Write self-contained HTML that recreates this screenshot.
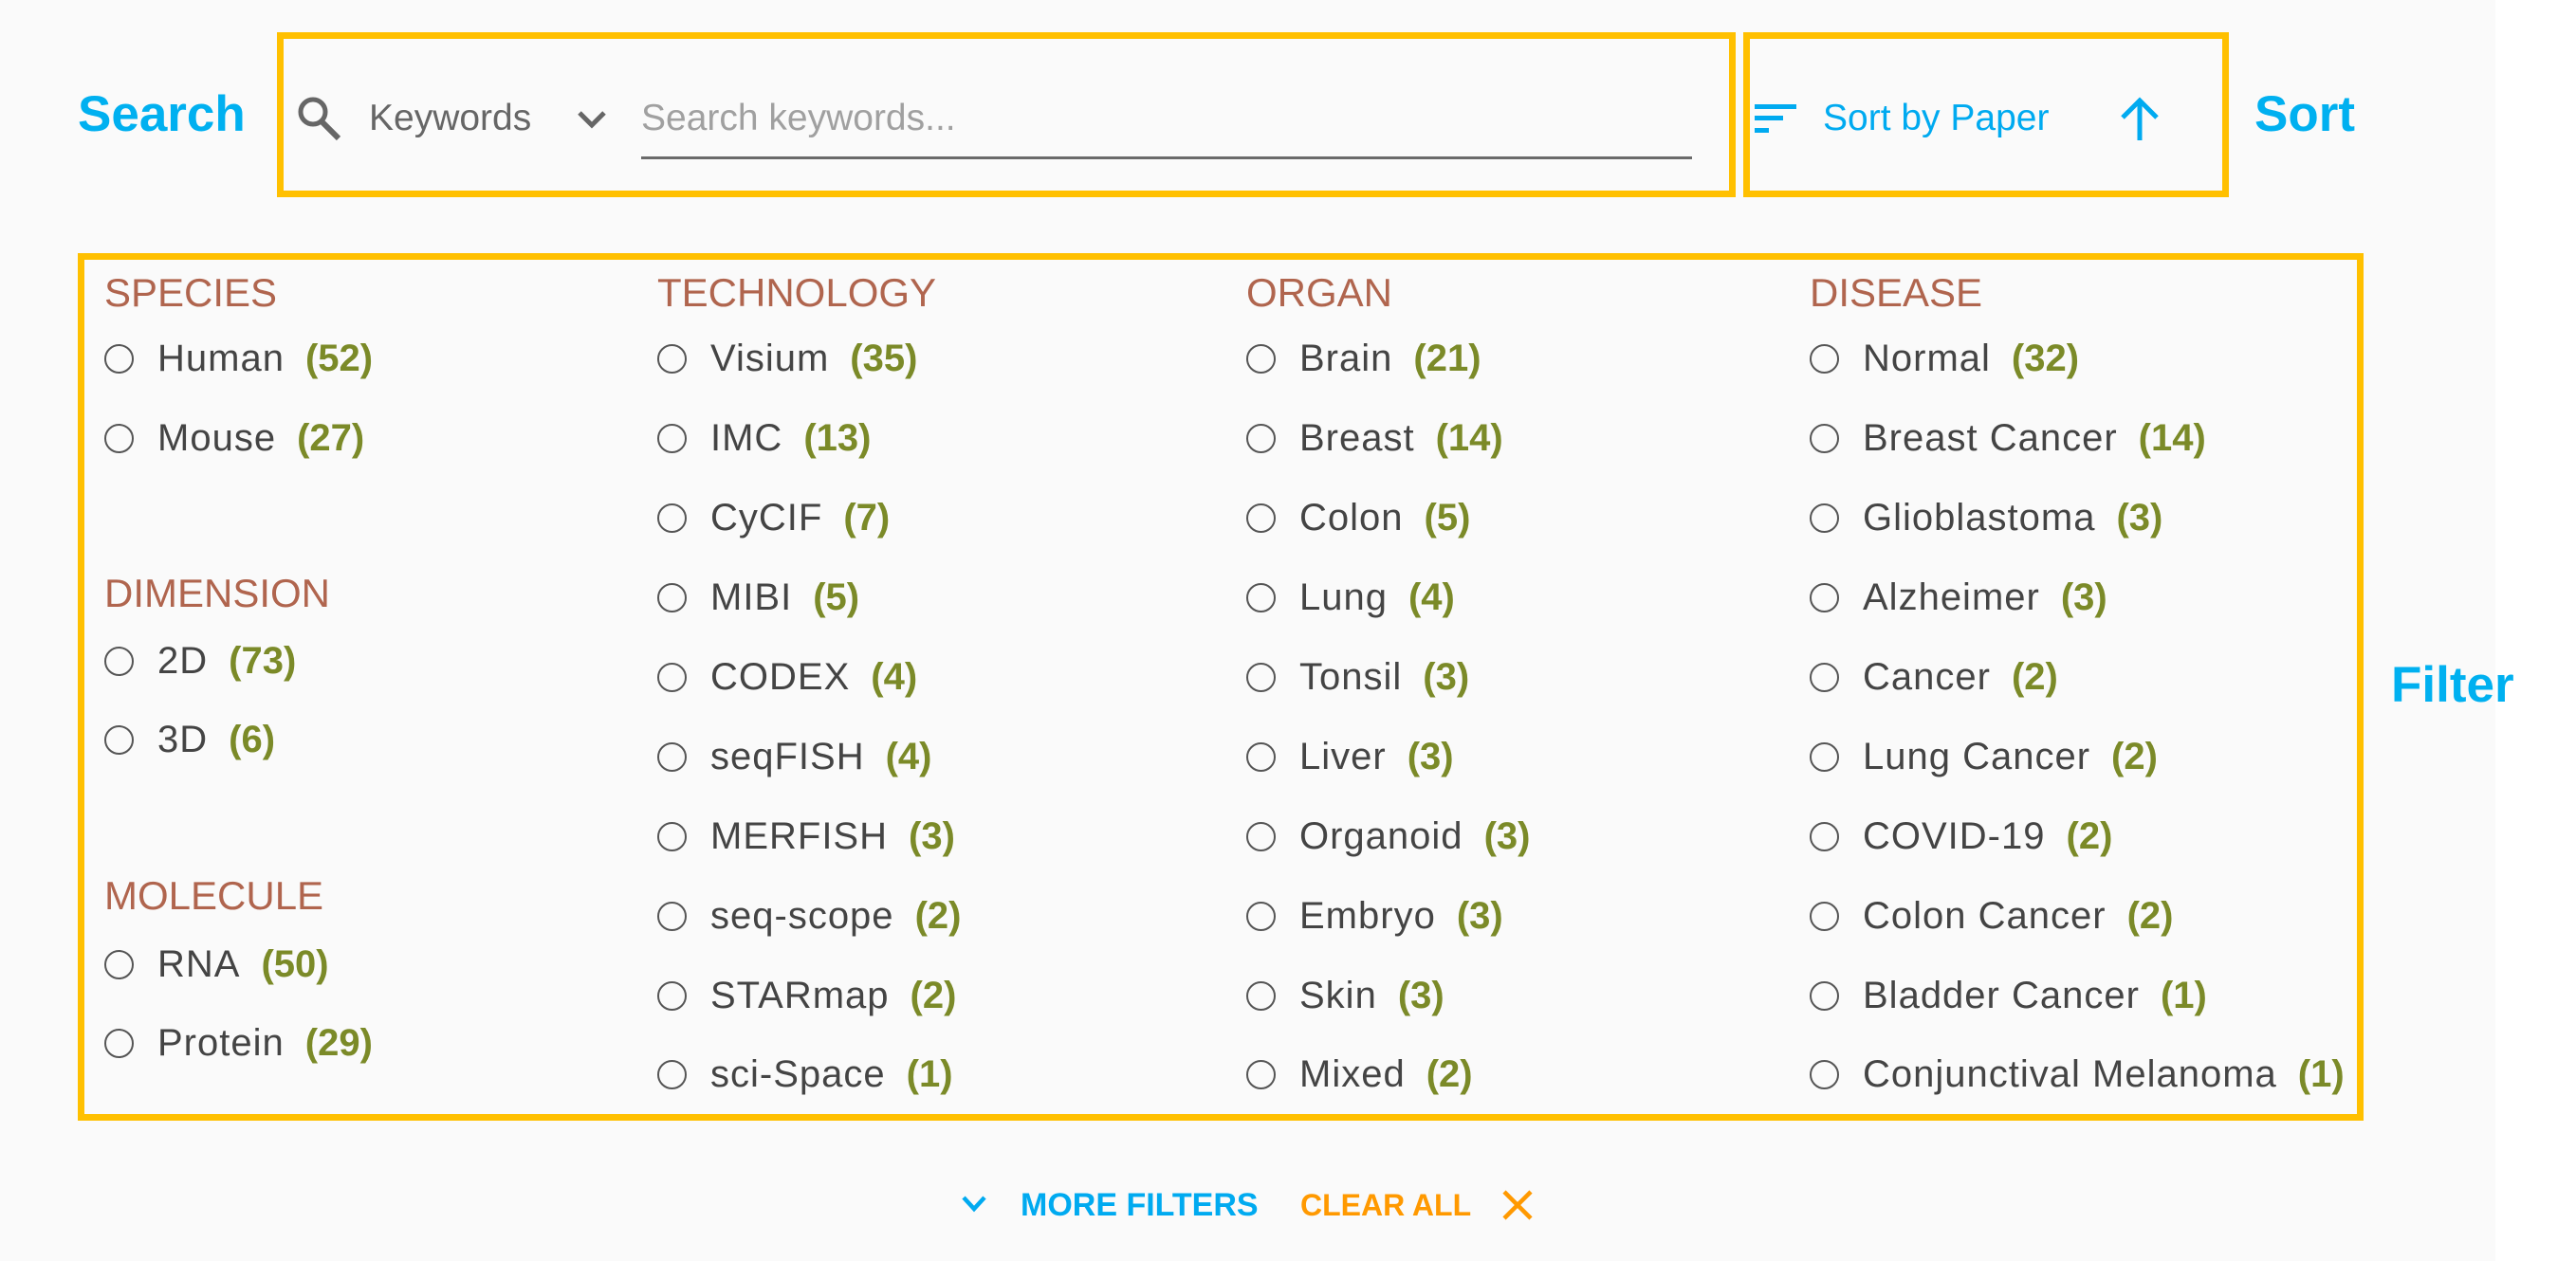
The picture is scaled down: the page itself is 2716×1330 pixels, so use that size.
<!DOCTYPE html>
<html><head><meta charset="utf-8"><style>
html,body{margin:0;padding:0;}
body{width:2716px;height:1330px;background:#fff;position:relative;overflow:hidden;font-family:"Liberation Sans",sans-serif;}
#bg{position:absolute;left:0;top:0;width:2631px;height:1330px;background:#fafafa;}
.box{position:absolute;border:7px solid #ffc000;box-sizing:border-box;}
.lbl{position:absolute;color:#00b0f0;font-weight:bold;font-size:53px;line-height:60px;}
.h{position:absolute;color:#b0654e;font-size:42px;line-height:50px;height:50px;}
.it{position:absolute;font-size:40px;line-height:50px;height:50px;white-space:nowrap;color:#444;letter-spacing:1px;}
.it .c{position:absolute;left:0;top:10px;width:27px;height:27px;border:2.5px solid #555;border-radius:50%;}
.it .t{position:absolute;left:56px;top:0;}
.it b{color:#7b8a28;font-weight:bold;margin-left:22px;letter-spacing:0;}
</style></head><body>
<div id="bg"></div>

<div class="lbl" style="left:82px;top:91px;">Search</div>
<div class="box" style="left:292px;top:34px;width:1538px;height:174px;"></div>
<svg style="position:absolute;left:311px;top:100px" width="52" height="50" viewBox="0 0 52 50"><circle cx="19" cy="18" r="13" fill="none" stroke="#666" stroke-width="5"/><line x1="28" y1="28" x2="46" y2="46" stroke="#666" stroke-width="6"/></svg>
<div style="position:absolute;left:389px;top:100px;font-size:39px;line-height:50px;color:#666;">Keywords</div>
<svg style="position:absolute;left:606px;top:114px" width="36" height="24" viewBox="0 0 36 24"><polyline points="5,5 18,18 31,5" fill="none" stroke="#666" stroke-width="5"/></svg>
<div style="position:absolute;left:676px;top:100px;font-size:39px;line-height:50px;color:#a0a0a0;">Search keywords...</div>
<div style="position:absolute;left:676px;top:165px;width:1108px;height:3px;background:#6a6a6a;"></div>

<div class="box" style="left:1838px;top:34px;width:512px;height:174px;"></div>
<div style="position:absolute;left:1850px;top:110px;width:44px;height:5px;background:#00aaf0"></div>
<div style="position:absolute;left:1850px;top:122px;width:30px;height:5px;background:#00aaf0"></div>
<div style="position:absolute;left:1850px;top:135px;width:15px;height:5px;background:#00aaf0"></div>
<div style="position:absolute;left:1922px;top:100px;font-size:39px;line-height:50px;color:#00aaf0;">Sort by Paper</div>
<svg style="position:absolute;left:2232px;top:102px" width="48" height="48" viewBox="0 0 48 48"><line x1="24" y1="4" x2="24" y2="46" stroke="#00aaf0" stroke-width="5"/><polyline points="6,22 24,4 42,22" fill="none" stroke="#00aaf0" stroke-width="5"/></svg>
<div class="lbl" style="left:2377px;top:91px;">Sort</div>

<div class="box" style="left:82px;top:267px;width:2410px;height:915px;"></div>
<div class="lbl" style="left:2521px;top:693px;">Filter</div>

<div class="h" style="left:110px;top:284px;">SPECIES</div>
<div class="it" style="left:110px;top:353px;"><i class="c"></i><span class="t">Human<b>(52)</b></span></div>
<div class="it" style="left:110px;top:437px;"><i class="c"></i><span class="t">Mouse<b>(27)</b></span></div>
<div class="h" style="left:110px;top:601px;">DIMENSION</div>
<div class="it" style="left:110px;top:672px;"><i class="c"></i><span class="t">2D<b>(73)</b></span></div>
<div class="it" style="left:110px;top:755px;"><i class="c"></i><span class="t">3D<b>(6)</b></span></div>
<div class="h" style="left:110px;top:920px;">MOLECULE</div>
<div class="it" style="left:110px;top:992px;"><i class="c"></i><span class="t">RNA<b>(50)</b></span></div>
<div class="it" style="left:110px;top:1075px;"><i class="c"></i><span class="t">Protein<b>(29)</b></span></div>

<div class="h" style="left:693px;top:284px;">TECHNOLOGY</div>
<div class="it" style="left:693px;top:353px;"><i class="c"></i><span class="t">Visium<b>(35)</b></span></div>
<div class="it" style="left:693px;top:437px;"><i class="c"></i><span class="t">IMC<b>(13)</b></span></div>
<div class="it" style="left:693px;top:521px;"><i class="c"></i><span class="t">CyCIF<b>(7)</b></span></div>
<div class="it" style="left:693px;top:605px;"><i class="c"></i><span class="t">MIBI<b>(5)</b></span></div>
<div class="it" style="left:693px;top:689px;"><i class="c"></i><span class="t">CODEX<b>(4)</b></span></div>
<div class="it" style="left:693px;top:773px;"><i class="c"></i><span class="t">seqFISH<b>(4)</b></span></div>
<div class="it" style="left:693px;top:857px;"><i class="c"></i><span class="t">MERFISH<b>(3)</b></span></div>
<div class="it" style="left:693px;top:941px;"><i class="c"></i><span class="t">seq-scope<b>(2)</b></span></div>
<div class="it" style="left:693px;top:1025px;"><i class="c"></i><span class="t">STARmap<b>(2)</b></span></div>
<div class="it" style="left:693px;top:1108px;"><i class="c"></i><span class="t">sci-Space<b>(1)</b></span></div>

<div class="h" style="left:1314px;top:284px;">ORGAN</div>
<div class="it" style="left:1314px;top:353px;"><i class="c"></i><span class="t">Brain<b>(21)</b></span></div>
<div class="it" style="left:1314px;top:437px;"><i class="c"></i><span class="t">Breast<b>(14)</b></span></div>
<div class="it" style="left:1314px;top:521px;"><i class="c"></i><span class="t">Colon<b>(5)</b></span></div>
<div class="it" style="left:1314px;top:605px;"><i class="c"></i><span class="t">Lung<b>(4)</b></span></div>
<div class="it" style="left:1314px;top:689px;"><i class="c"></i><span class="t">Tonsil<b>(3)</b></span></div>
<div class="it" style="left:1314px;top:773px;"><i class="c"></i><span class="t">Liver<b>(3)</b></span></div>
<div class="it" style="left:1314px;top:857px;"><i class="c"></i><span class="t">Organoid<b>(3)</b></span></div>
<div class="it" style="left:1314px;top:941px;"><i class="c"></i><span class="t">Embryo<b>(3)</b></span></div>
<div class="it" style="left:1314px;top:1025px;"><i class="c"></i><span class="t">Skin<b>(3)</b></span></div>
<div class="it" style="left:1314px;top:1108px;"><i class="c"></i><span class="t">Mixed<b>(2)</b></span></div>

<div class="h" style="left:1908px;top:284px;">DISEASE</div>
<div class="it" style="left:1908px;top:353px;"><i class="c"></i><span class="t">Normal<b>(32)</b></span></div>
<div class="it" style="left:1908px;top:437px;"><i class="c"></i><span class="t">Breast Cancer<b>(14)</b></span></div>
<div class="it" style="left:1908px;top:521px;"><i class="c"></i><span class="t">Glioblastoma<b>(3)</b></span></div>
<div class="it" style="left:1908px;top:605px;"><i class="c"></i><span class="t">Alzheimer<b>(3)</b></span></div>
<div class="it" style="left:1908px;top:689px;"><i class="c"></i><span class="t">Cancer<b>(2)</b></span></div>
<div class="it" style="left:1908px;top:773px;"><i class="c"></i><span class="t">Lung Cancer<b>(2)</b></span></div>
<div class="it" style="left:1908px;top:857px;"><i class="c"></i><span class="t">COVID-19<b>(2)</b></span></div>
<div class="it" style="left:1908px;top:941px;"><i class="c"></i><span class="t">Colon Cancer<b>(2)</b></span></div>
<div class="it" style="left:1908px;top:1025px;"><i class="c"></i><span class="t">Bladder Cancer<b>(1)</b></span></div>
<div class="it" style="left:1908px;top:1108px;"><i class="c"></i><span class="t">Conjunctival Melanoma<b>(1)</b></span></div>

<svg style="position:absolute;left:1012px;top:1258px" width="30" height="24" viewBox="0 0 30 24"><polyline points="4,5 15,17 26,5" fill="none" stroke="#00aaf0" stroke-width="4.5"/></svg>
<div style="position:absolute;left:1076px;top:1246px;font-size:34px;line-height:50px;color:#00aaf0;font-weight:bold;">MORE FILTERS</div>
<div style="position:absolute;left:1371px;top:1246px;font-size:32px;line-height:50px;color:#ff9900;font-weight:bold;">CLEAR ALL</div>
<svg style="position:absolute;left:1582px;top:1254px" width="36" height="34" viewBox="0 0 36 34"><line x1="4" y1="3" x2="32" y2="31" stroke="#ff9900" stroke-width="4.5"/><line x1="32" y1="3" x2="4" y2="31" stroke="#ff9900" stroke-width="4.5"/></svg>
</body></html>
